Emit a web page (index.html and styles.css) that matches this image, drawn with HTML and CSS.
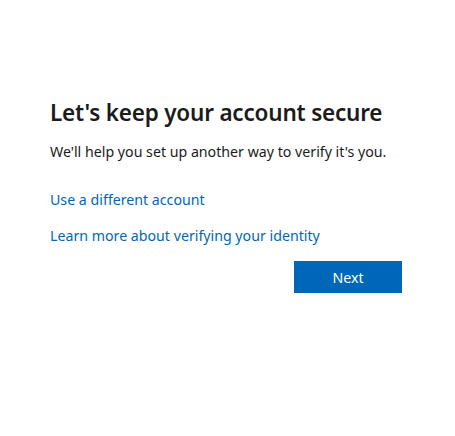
FILE: index.html
```html
<!DOCTYPE html>
<html lang="en">
<head>
<meta charset="utf-8">
<link rel="stylesheet" href="styles.css">
</head>
<body>
<main class="box">
  <h1 class="title">Let's keep your account secure</h1>
  <p class="desc">We'll help you set up another way to verify it's you.</p>
  <a class="link first" href="#">Use a different account</a>
  <a class="link second" href="#">Learn more about verifying your identity</a>
  <div class="actions">
    <button class="next" type="button">Next</button>
  </div>
</main>
</body>
</html>
```
FILE: styles.css
```css
html, body {
  margin: 0;
  padding: 0;
  background: #ffffff;
}
body {
  font-family: "Noto Sans", "Open Sans", sans-serif;
  color: #1b1b1b;
}
.box {
  width: 352px;
  margin-left: 50px;
  padding-top: 97px;
  display: flex;
  flex-direction: column;
}
.title {
  margin: 0;
  font-size: 22.5px;
  font-weight: 600;
  line-height: 32px;
  letter-spacing: -0.2px;
}
.desc {
  margin: 13px 0 0;
  font-size: 14.2px;
  line-height: 20px;
}
.link {
  color: #0067b8;
  text-decoration: none;
  font-size: 14.2px;
  line-height: 20px;
  align-self: flex-start;
}
.first { margin-top: 28px; }
.second { margin-top: 16px; }
.actions {
  display: flex;
  justify-content: flex-end;
  margin-top: 15px;
}
.next {
  width: 108px;
  height: 32px;
  border: none;
  background: #0067b8;
  color: #ffffff;
  font-family: inherit;
  font-size: 14.2px;
  padding: 0;
}
```
